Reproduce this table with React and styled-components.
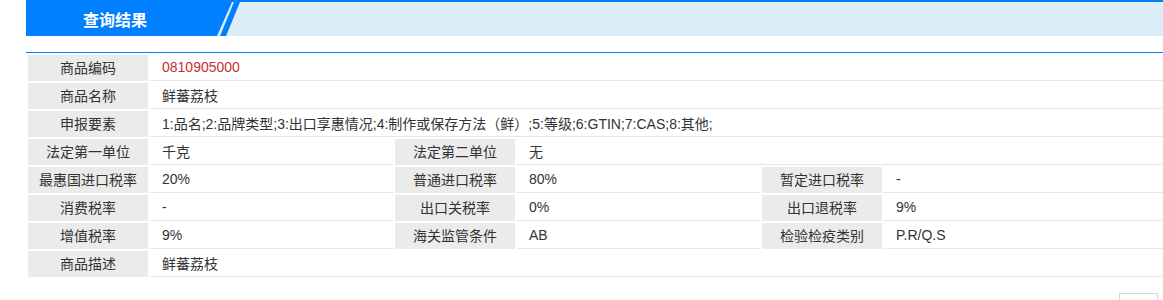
import styled, { createGlobalStyle } from "styled-components";

const GlobalStyle = createGlobalStyle`
  html, body {
    margin: 0;
    padding: 0;
    overflow: hidden;
    background: #fff;
  }
  body {
    font-family: "Liberation Sans", "Noto Sans CJK SC", sans-serif;
    font-size: 14px;
    color: #333;
  }
`;

const Page = styled.div`
  width: 1160px;
  margin-left: 26px;
`;

const Header = styled.div`
  display: flex;
  height: 34px;
  border-top: 2px solid #0080ff;
  background: #ddedf8;
`;

const Tab = styled.div`
  position: relative;
  width: 214px;
  height: 34px;
  display: flex;
  align-items: center;
  padding-left: 57px;
  box-sizing: border-box;
`;

const TabShape = styled.svg`
  position: absolute;
  left: 0;
  top: 0;
`;

const Title = styled.h2`
  position: relative;
  margin: 0;
  font-size: 16px;
  font-weight: bold;
  color: #fff;
`;

const Section = styled.div`
  margin-top: 16px;
  border-top: 1px solid #0080ff;
`;

const Table = styled.table`
  width: 100%;
  table-layout: fixed;
  border-collapse: separate;
  border-spacing: 2px;
`;

const Label = styled.td`
  height: 24px;
  padding: 0 0 2px;
  background: #ebebeb;
  text-align: center;
  vertical-align: middle;
  color: #333;
  white-space: nowrap;
`;

const Value = styled.td`
  height: 23px;
  padding: 0 0 2px 12px;
  border-bottom: 1px solid #e6e6e6;
  vertical-align: middle;
  color: ${(p) => (p.$red ? "#c9302c" : "#333")};
  white-space: nowrap;
`;

const Footer = styled.div`
  display: flex;
  justify-content: flex-end;
  padding: 14px 28px 0 0;
`;

const PageBox = styled.div`
  width: 37px;
  height: 26px;
  border: 1px solid #d6d6d6;
`;

const rows = [
  [["商品编码", "0810905000", true]],
  [["商品名称", "鲜蕃荔枝"]],
  [["申报要素", "1:品名;2:品牌类型;3:出口享惠情况;4:制作或保存方法（鲜）;5:等级;6:GTIN;7:CAS;8:其他;"]],
  [
    ["法定第一单位", "千克"],
    ["法定第二单位", "无"],
  ],
  [
    ["最惠国进口税率", "20%"],
    ["普通进口税率", "80%"],
    ["暂定进口税率", "-"],
  ],
  [
    ["消费税率", "-"],
    ["出口关税率", "0%"],
    ["出口退税率", "9%"],
  ],
  [
    ["增值税率", "9%"],
    ["海关监管条件", "AB"],
    ["检验检疫类别", "P.R/Q.S"],
  ],
  [["商品描述", "鲜蕃荔枝"]],
];

export default function App() {
  return (
    <Page>
      <GlobalStyle />
      <Header>
        <Tab>
          <TabShape width="214" height="34" viewBox="0 0 214 34">
            <polygon points="0,0 206,0 191,34 0,34" fill="#0080ff" />
            <polygon points="208,0 214,0 200,34 194,34" fill="#0080ff" />
          </TabShape>
          <Title>查询结果</Title>
        </Tab>
      </Header>
      <Section>
        <Table>
          <colgroup>
            <col style={{ width: 120 }} />
            <col style={{ width: 243 }} />
            <col style={{ width: 120 }} />
            <col style={{ width: 243 }} />
            <col style={{ width: 120 }} />
            <col />
          </colgroup>
          <tbody>
            {rows.map((cells, i) => (
              <tr key={i}>
                {cells.map(([label, value, red], j) => {
                  const span = j === cells.length - 1 ? 1 + (3 - cells.length) * 2 : 1;
                  return [
                    <Label key={label}>{label}</Label>,
                    <Value key={label + "v"} colSpan={span} $red={red}>
                      {value}
                    </Value>,
                  ];
                })}
              </tr>
            ))}
          </tbody>
        </Table>
      </Section>
      <Footer>
        <PageBox />
      </Footer>
    </Page>
  );
}
